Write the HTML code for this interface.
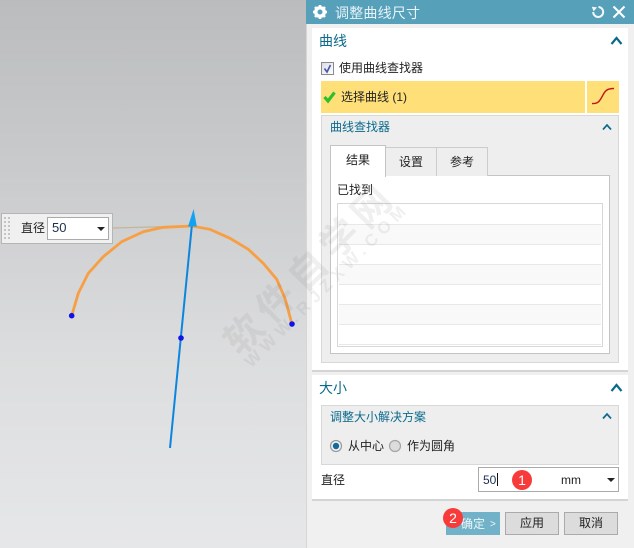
<!DOCTYPE html>
<html><head><meta charset="utf-8">
<style>
html,body{margin:0;padding:0}
body{width:634px;height:548px;position:relative;overflow:hidden;background:#f0f0f0;font-family:"Liberation Sans","Noto Sans CJK SC",sans-serif;font-size:12px;color:#222}
.a{position:absolute;box-sizing:border-box}
.t{position:absolute;white-space:nowrap;line-height:16px;height:16px}
.teal{color:#0b6a8c}
.row{position:absolute;left:339px;width:262px;height:1px;background:#e8e8e8}
.alt{position:absolute;left:339px;width:262px;height:19px;background:#f9f9f9}
.btn{position:absolute;top:512px;width:54px;height:23px;box-sizing:border-box;background:#dcdcdc;border:1px solid #aaa;text-align:center;line-height:21px;font-size:12px;color:#222}
.badge{position:absolute;width:20px;height:20px;border-radius:50%;background:#f73b3b;color:#fff;text-align:center;line-height:20px;font-size:14px}
.tab{position:absolute;top:147px;height:29px;box-sizing:border-box;background:#eee;border:1px solid #ccc;border-bottom:none;text-align:center;line-height:28px;font-size:12px}
</style></head>
<body>
<div class="a" style="left:0;top:0;width:306px;height:548px;background:linear-gradient(#bbbcbe 0%,#c9cacc 30%,#dcddde 65%,#e6e7e9 100%)"></div>
<div class="a" style="left:306px;top:24px;width:1px;height:524px;background:#d6d6d6"></div>

<svg class="a" style="left:0;top:0" width="306" height="548">
<line x1="113" y1="228" x2="190" y2="226" stroke="#c0b69a" stroke-width="1.2"/>
<polyline fill="none" stroke="#f79f45" stroke-width="2.8" points="71.7,315.7 78.3,293.3 88.3,273.3 103.3,256.7 121.7,241.7 143.3,231.7 163.3,227.3 191.7,226 210,229.3 230,238.3 248.3,249.3 263.3,263.3 276.7,279.3 285,298.3 292,324.3"/>
<line x1="170" y1="448" x2="192" y2="224" stroke="#0b86e0" stroke-width="2"/>
<polygon points="193.6,209 188,226.5 196.8,226.5" fill="#12a2f2"/>
<circle cx="71.7" cy="315.7" r="2.8" fill="#1212e8"/>
<circle cx="292" cy="324" r="2.8" fill="#1212e8"/>
<circle cx="181" cy="338" r="2.8" fill="#1212e8"/>
</svg>

<div class="a" style="left:1px;top:213px;width:112px;height:31px;background:#f0f0f0;border:1px solid #b5b5b5"></div>
<svg class="a" style="left:3px;top:215px" width="9" height="26">
<g fill="#c4c4c4"><rect x="1" y="2" width="2" height="2"/><rect x="5" y="2" width="2" height="2"/><rect x="1" y="6" width="2" height="2"/><rect x="5" y="6" width="2" height="2"/><rect x="1" y="10" width="2" height="2"/><rect x="5" y="10" width="2" height="2"/><rect x="1" y="14" width="2" height="2"/><rect x="5" y="14" width="2" height="2"/><rect x="1" y="18" width="2" height="2"/><rect x="5" y="18" width="2" height="2"/><rect x="1" y="22" width="2" height="2"/><rect x="5" y="22" width="2" height="2"/></g>
</svg>
<div class="t" style="left:21px;top:220px;font-size:12px">直径</div>
<div class="a" style="left:47px;top:217px;width:62px;height:23px;background:#fff;border:1px solid #aaa"></div>
<div class="t" style="left:52px;top:220px;font-size:13px;color:#1a3050">50</div>
<div class="a" style="left:97px;top:227px;width:0;height:0;border-left:4px solid transparent;border-right:4px solid transparent;border-top:4px solid #222"></div>

<!-- title bar -->
<div class="a" style="left:306px;top:0;width:328px;height:24px;background:#56a0ba"></div>
<svg class="a" style="left:312px;top:4px" width="16" height="16" viewBox="0 0 16 16">
<circle cx="8" cy="8" r="4.4" fill="none" stroke="#fff" stroke-width="3.2"/>
<g stroke="#fff" stroke-width="2.6"><line x1="8" y1="1" x2="8" y2="15"/><line x1="1" y1="8" x2="15" y2="8"/><line x1="3" y1="3" x2="13" y2="13"/><line x1="13" y1="3" x2="3" y2="13"/></g>
<circle cx="8" cy="8" r="2.5" fill="#56a0ba"/>
</svg>
<div class="t" style="left:335px;top:5px;font-size:14px;color:#e8f3f7;letter-spacing:0.2px">调整曲线尺寸</div>
<svg class="a" style="left:591px;top:5px" width="14" height="14" viewBox="0 0 14 14">
<path d="M7.5 2 A5 5 0 1 1 2.2 7" fill="none" stroke="#f2f8fa" stroke-width="2"/>
<polygon points="0.8,1.8 6,2.4 2.6,6.4" fill="#f2f8fa"/>
</svg>
<svg class="a" style="left:612px;top:5px" width="14" height="14" viewBox="0 0 14 14">
<path d="M1.5 1.5 L12.5 12.5 M12.5 1.5 L1.5 12.5" stroke="#fff" stroke-width="2.1"/>
</svg>

<!-- curve section -->
<div class="a" style="left:312px;top:28px;width:316px;height:344px;background:#fff;border-bottom:2px solid #d4d4d4"></div>
<div class="t teal" style="left:319px;top:33px;font-size:14px">曲线</div>
<svg class="a" style="left:610px;top:35px" width="13" height="11" viewBox="0 0 13 11"><path d="M1.5 9 L6.5 3 L11.5 9" fill="none" stroke="#0b6a8c" stroke-width="2.2"/></svg>
<div class="a" style="left:321px;top:62px;width:13px;height:13px;border:1px solid #8a8a8a;background:linear-gradient(135deg,#dcdce8,#fff)"></div>
<svg class="a" style="left:321px;top:62px" width="13" height="13" viewBox="0 0 13 13"><path d="M3.5 6.5 L6 10 L9.5 3" fill="none" stroke="#4a5aa8" stroke-width="1.7"/></svg>
<div class="t" style="left:339px;top:60px;font-size:12px">使用曲线查找器</div>

<div class="a" style="left:321px;top:81px;width:264px;height:32px;background:#fedf78"></div>
<div class="a" style="left:587px;top:81px;width:32px;height:32px;background:#fedf78"></div>
<svg class="a" style="left:323px;top:90px" width="13" height="14" viewBox="0 0 13 14"><path d="M1.5 7 L5 11 L11.5 2.5" fill="none" stroke="#2cc02c" stroke-width="3.2"/></svg>
<div class="t" style="left:341px;top:89px;font-size:12px">选择曲线 (1)</div>
<svg class="a" style="left:587px;top:81px" width="32" height="32" viewBox="0 0 32 32"><path d="M5 22.5 C12 23 13 19 16 14 C18 10 20 7.5 27 7.5" fill="none" stroke="#c01818" stroke-width="1.4"/></svg>

<div class="a" style="left:321px;top:115px;width:298px;height:248px;background:#eee;border:1px solid #d8d8d8"></div>
<div class="t teal" style="left:330px;top:119px;font-size:12px">曲线查找器</div>
<svg class="a" style="left:602px;top:123px" width="10" height="8" viewBox="0 0 10 8"><path d="M1 6.5 L5 2 L9 6.5" fill="none" stroke="#0b6a8c" stroke-width="1.7"/></svg>

<div class="a" style="left:330px;top:175px;width:280px;height:179px;background:#fff;border:1px solid #c4c4c4"></div>
<div class="tab" style="left:385px;width:52px">设置</div>
<div class="tab" style="left:436px;width:52px">参考</div>
<div class="a" style="left:330px;top:145px;width:56px;height:32px;background:#fff;border:1px solid #c4c4c4;border-bottom:none;text-align:center;line-height:29px;font-size:12px">结果</div>

<div class="t" style="left:337px;top:182px;font-size:12px">已找到</div>
<div class="a" style="left:337px;top:203px;width:266px;height:144px;border:1px solid #d8d8d8;background:#fff"></div>
<div class="alt" style="top:225px"></div><div class="alt" style="top:265px"></div><div class="alt" style="top:305px"></div>
<div class="row" style="top:224px"></div><div class="row" style="top:244px"></div><div class="row" style="top:264px"></div><div class="row" style="top:284px"></div><div class="row" style="top:304px"></div><div class="row" style="top:324px"></div><div class="row" style="top:344px"></div>

<!-- size section -->
<div class="a" style="left:312px;top:375px;width:316px;height:126px;background:#fff;border-bottom:2px solid #d4d4d4"></div>
<div class="t teal" style="left:319px;top:380px;font-size:14px">大小</div>
<svg class="a" style="left:610px;top:382px" width="13" height="11" viewBox="0 0 13 11"><path d="M1.5 9 L6.5 3 L11.5 9" fill="none" stroke="#0b6a8c" stroke-width="2.2"/></svg>
<div class="a" style="left:321px;top:405px;width:298px;height:60px;background:#eee;border:1px solid #d8d8d8"></div>
<div class="t teal" style="left:330px;top:409px;font-size:12px">调整大小解决方案</div>
<svg class="a" style="left:602px;top:412px" width="10" height="8" viewBox="0 0 10 8"><path d="M1 6.5 L5 2 L9 6.5" fill="none" stroke="#0b6a8c" stroke-width="1.7"/></svg>
<svg class="a" style="left:329px;top:439px" width="14" height="14" viewBox="0 0 14 14"><circle cx="7" cy="7" r="5.5" fill="#f2f2f2" stroke="#9a9a9a" stroke-width="1.2"/><circle cx="7" cy="7" r="3.2" fill="#0f6c9c"/></svg>
<div class="t" style="left:348px;top:438px;font-size:12px">从中心</div>
<svg class="a" style="left:388px;top:439px" width="14" height="14" viewBox="0 0 14 14"><circle cx="7" cy="7" r="5.5" fill="#dcdcdc" stroke="#a4a4a4" stroke-width="1.2"/></svg>
<div class="t" style="left:407px;top:438px;font-size:12px">作为圆角</div>

<div class="t" style="left:321px;top:472px;font-size:12px">直径</div>
<div class="a" style="left:478px;top:467px;width:141px;height:25px;background:#fff;border:1px solid #aaa"></div>
<div class="t" style="left:483px;top:472px;font-size:12px;color:#1a3050">50</div>
<div class="a" style="left:497px;top:473px;width:1px;height:13px;background:#111"></div>
<div class="t" style="left:561px;top:472px;font-size:12px">mm</div>
<div class="a" style="left:607px;top:478px;width:0;height:0;border-left:4px solid transparent;border-right:4px solid transparent;border-top:4px solid #222"></div>
<div class="badge" style="left:512px;top:470px">1</div>

<div class="a" style="left:446px;top:512px;width:54px;height:23px;background:#72b2c8"></div>
<div class="t" style="left:461px;top:516px;font-size:12px;color:#eef7fa">确定</div>
<div class="t" style="left:490px;top:517px;font-size:10px;color:#eef7fa">&gt;</div>
<div class="btn" style="left:505px">应用</div>
<div class="btn" style="left:564px">取消</div>
<div class="badge" style="left:443px;top:508px">2</div>

<!-- watermark -->
<svg class="a" style="left:0;top:0;pointer-events:none" width="634" height="548">
<g transform="translate(240,357) rotate(-45)" fill="#777" fill-opacity="0.11">
<text x="0" y="0" font-size="38" font-weight="700" letter-spacing="7" font-family="'Liberation Sans','Noto Sans CJK SC',sans-serif">软件自学网</text>
<text x="0" y="16" font-size="17" font-weight="700" letter-spacing="5.4" font-family="'Liberation Sans',sans-serif">WWW.RJZXW.COM</text>
</g>
</svg>
</body></html>
